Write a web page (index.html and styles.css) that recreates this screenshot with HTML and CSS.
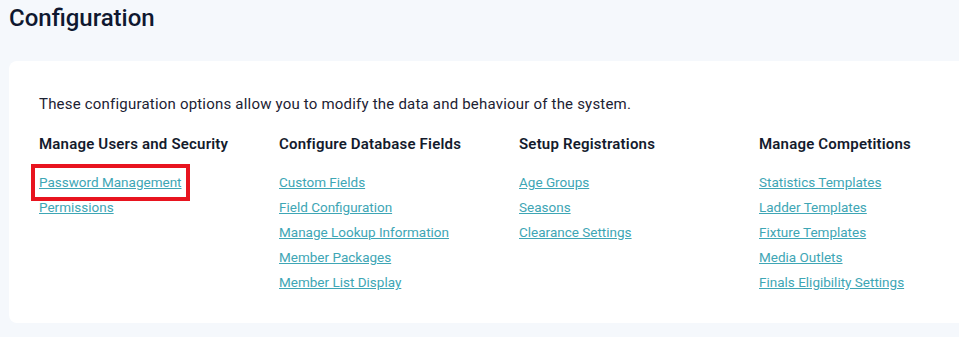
FILE: index.html
```html
<!DOCTYPE html>
<html lang="en">
<head>
<meta charset="UTF-8">
<meta name="viewport" content="width=device-width, initial-scale=1.0">
<title>Configuration</title>
<link rel="stylesheet" href="styles.css">
</head>
<body>

<div class="page">

  <h1>Configuration</h1>

  <div class="card">
    <p class="intro">These configuration options allow you to modify the data and behaviour of the system.</p>

    <div class="columns">
      <div class="group">
        <h2>Manage Users and Security</h2>
        <a href="#" class="highlight">Password Management</a>
        <a href="#">Permissions</a>
      </div>

      <div class="group">
        <h2>Configure Database Fields</h2>
        <a href="#">Custom Fields</a>
        <a href="#">Field Configuration</a>
        <a href="#">Manage Lookup Information</a>
        <a href="#">Member Packages</a>
        <a href="#">Member List Display</a>
      </div>

      <div class="group">
        <h2>Setup Registrations</h2>
        <a href="#">Age Groups</a>
        <a href="#">Seasons</a>
        <a href="#">Clearance Settings</a>
      </div>

      <div class="group">
        <h2>Manage Competitions</h2>
        <a href="#">Statistics Templates</a>
        <a href="#">Ladder Templates</a>
        <a href="#">Fixture Templates</a>
        <a href="#">Media Outlets</a>
        <a href="#">Finals Eligibility Settings</a>
      </div>
    </div>
  </div>

</div>

</body>
</html>
```

FILE: styles.css
```css
body {
  font-family: Roboto, "Liberation Sans", sans-serif;
  background-color: #f5f8fc;
  margin: 0;
  padding: 0;
  color: #141b2d;
}

.page {
  padding: 0 0 0 9px;
}

h1 {
  margin: 0;
  padding-top: 4px;
  height: 57px;
  font-size: 24px;
  font-weight: 500;
  line-height: 28px;
  color: #0f1830;
}

.card {
  background-color: #fff;
  border-radius: 8px 0 0 8px;
  padding: 30px 0 28px 30px;
  overflow: hidden;
}

.intro {
  margin: 0 0 16px;
  font-size: 15px;
  letter-spacing: 0.2px;
  line-height: 26px;
  color: #1c2233;
}

.columns {
  display: flex;
}

.group {
  flex: 0 0 240px;
  display: flex;
  flex-direction: column;
  align-items: flex-start;
}

h2 {
  margin: 0 0 15px;
  font-size: 15px;
  font-weight: 600;
  letter-spacing: 0.2px;
  line-height: 22px;
  color: #141b2d;
}

.group a {
  font-size: 13.5px;
  line-height: 25px;
  color: #3ea6b5;
  text-decoration: underline;
}

.group a.highlight {
  padding: 0 2px;
  margin: 0 -2px;
  outline: 4px solid #e8141f;
  outline-offset: 2px;
}
```
